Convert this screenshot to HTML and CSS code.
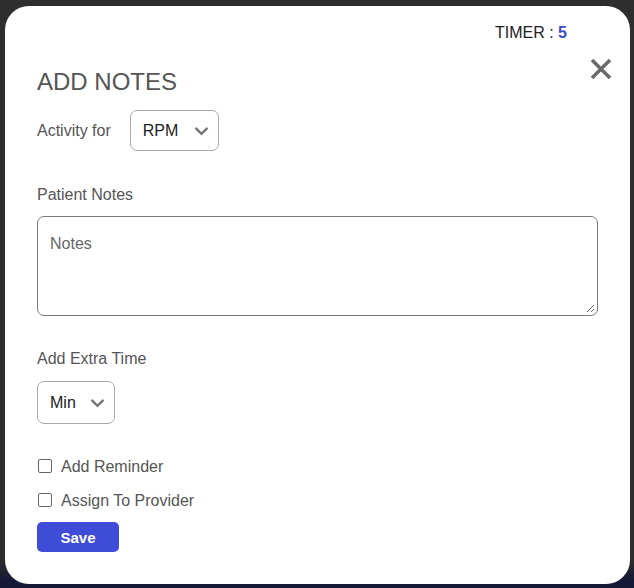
FILE: index.html
```html
<!DOCTYPE html>
<html>
<head>
<meta charset="utf-8">
<link rel="stylesheet" href="styles.css">
</head>
<body>
<div class="modal">
  <div class="timer">TIMER : <b>5</b></div>
  <button class="close" aria-label="Close">
    <svg width="22" height="22" viewBox="0 0 22 22"><path d="M2 2 L20 20 M20 2 L2 20" stroke="#6b6b6b" stroke-width="3.6" stroke-linecap="butt"/></svg>
  </button>
  <h1 class="title">ADD NOTES</h1>
  <div class="activity">
    <span class="label">Activity for</span>
    <div class="select sel-rpm"><span>RPM</span><svg width="15" height="10" viewBox="0 0 15 10"><path d="M1.5 1.8 L7.5 7.8 L13.5 1.8" fill="none" stroke="#777" stroke-width="2.4"/></svg></div>
  </div>
  <div class="label notes-label">Patient Notes</div>
  <div class="textarea"><span class="ph">Notes</span>
    <svg class="grip" width="10" height="10" viewBox="0 0 10 10"><path d="M9 2 L2 9 M9 6 L6 9" stroke="#666" stroke-width="1"/></svg>
  </div>
  <div class="label extra-label">Add Extra Time</div>
  <div class="select sel-min"><span>Min</span><svg width="15" height="10" viewBox="0 0 15 10"><path d="M1.5 1.8 L7.5 7.8 L13.5 1.8" fill="none" stroke="#777" stroke-width="2.4"/></svg></div>
  <label class="check c1"><span class="box"></span><span>Add Reminder</span></label>
  <label class="check c2"><span class="box"></span><span>Assign To Provider</span></label>
  <button class="save">Save</button>
</div>
</body>
</html>
```
FILE: styles.css
```css
html, body {
  margin: 0;
  height: 588px;
  overflow: hidden;
}
body {
  background: linear-gradient(#2e2e2e 0, #2e2e2e 560px, #151935 580px);
  padding: 6px 4px 4px 5px;
  box-sizing: border-box;
  font-family: "Liberation Sans", Arial, sans-serif;
}
.modal {
  position: relative;
  background: #fff;
  width: 625px;
  height: 578px;
  border-radius: 24px;
  box-sizing: border-box;
  padding: 0 32px;
  display: flex;
  flex-direction: column;
  align-items: flex-start;
}
.timer {
  align-self: flex-end;
  margin: 18px 31px 0 0;
  font-size: 16px;
  color: #222;
  line-height: 18px;
}
.timer b {
  color: #3d4bc4;
}
.close {
  position: absolute;
  right: 18px;
  top: 52px;
  border: 0;
  background: none;
  padding: 0;
  width: 22px;
  height: 22px;
}
.title {
  margin: 26px 0 0 0;
  font-size: 24px;
  font-weight: normal;
  color: #555;
  line-height: 28px;
}
.label {
  font-size: 16px;
  color: #555;
  line-height: 20px;
}
.activity {
  display: flex;
  align-items: center;
  gap: 19px;
  margin-top: 14px;
}
.select {
  display: flex;
  align-items: center;
  justify-content: space-between;
  border: 1px solid #aaa;
  border-radius: 7px;
  box-sizing: border-box;
  font-size: 16px;
  color: #222;
  padding: 0 9px 0 12px;
}
.sel-rpm {
  width: 89px;
  height: 41px;
}
.notes-label {
  margin-top: 34px;
}
.textarea {
  position: relative;
  width: 561px;
  height: 100px;
  box-sizing: border-box;
  border: 1px solid #7a7a7a;
  border-radius: 7px;
  margin-top: 11px;
  padding: 17px 12px 0;
}
.ph {
  font-size: 16px;
  color: #666;
  line-height: 20px;
}
.grip {
  position: absolute;
  right: 2px;
  bottom: 2px;
}
.extra-label {
  margin-top: 33px;
}
.sel-min {
  width: 78px;
  height: 43px;
  margin-top: 12px;
}
.check {
  display: flex;
  align-items: center;
  gap: 9px;
  font-size: 16px;
  color: #555;
  line-height: 20px;
}
.box {
  width: 12px;
  height: 12px;
  border: 1px solid #666;
  border-radius: 2px;
  margin-left: 1px;
  margin-top: -3px;
}
.c1 {
  margin-top: 33px;
}
.c2 {
  margin-top: 14px;
}
.save {
  margin-top: 11px;
  width: 82px;
  height: 30px;
  border: 0;
  border-radius: 5px;
  background: #3f4cd8;
  color: #fff;
  font-family: "Liberation Sans", Arial, sans-serif;
  font-size: 15px;
  font-weight: bold;
  padding: 0;
}
```
